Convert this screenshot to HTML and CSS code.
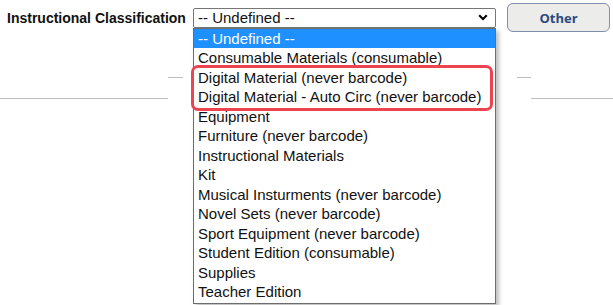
FILE: index.html
```html
<!DOCTYPE html>
<html lang="en">
<head>
    <meta charset="UTF-8">
    <title>Instructional Classification</title>
    <link rel="stylesheet" href="styles.css">
</head>
<body>
    <div class="form-row">
        <label class="field-label" for="classification">Instructional Classification</label>
        <div class="select-wrap">
            <div class="select-box" id="classification">
                <span>-- Undefined --</span>
                <svg class="chevron" width="10" height="7" viewBox="0 0 10 7">
                    <path d="M1.2 1.2 L5 5 L8.8 1.2" fill="none" stroke="#000" stroke-width="2"/>
                </svg>
            </div>
            <ul class="dropdown">
                <li class="selected">-- Undefined --</li>
                <li>Consumable Materials (consumable)</li>
                <li>Digital Material (never barcode)</li>
                <li>Digital Material - Auto Circ (never barcode)</li>
                <li>Equipment</li>
                <li>Furniture (never barcode)</li>
                <li>Instructional Materials</li>
                <li>Kit</li>
                <li>Musical Insturments (never barcode)</li>
                <li>Novel Sets (never barcode)</li>
                <li>Sport Equipment (never barcode)</li>
                <li>Student Edition (consumable)</li>
                <li>Supplies</li>
                <li>Teacher Edition</li>
            </ul>
            <div class="callout"></div>
        </div>
        <button class="btn-other">Other</button>
    </div>

    <div class="section-rule">
        <div class="rule-row">
            <span class="tick tick-left"></span>
            <span class="tick tick-right"></span>
        </div>
        <div class="rule-row rule-long">
            <span class="line line-left"></span>
            <span class="line line-right"></span>
        </div>
    </div>
</body>
</html>
```

FILE: styles.css
```css
html, body {
    height: 100%;
}
body {
    margin: 0;
    min-height: 305px;
    background-color: #fff;
    font-family: "Liberation Sans", Arial, sans-serif;
    color: #000;
}
.form-row {
    display: flex;
    align-items: center;
    height: 29px;
    padding: 3px 0 0 7px;
}
.field-label {
    font-weight: bold;
    font-size: 14px;
    width: 186px;
    color: #111;
}
.select-wrap {
    position: relative;
    z-index: 2;
    width: 303px;
}
.select-box {
    display: flex;
    align-items: center;
    justify-content: space-between;
    box-sizing: border-box;
    height: 20px;
    padding: 0 7px 0 4px;
    border: 1px solid #767676;
    border-radius: 2px;
    font-size: 15px;
    color: #111;
}
.chevron {
    display: block;
}
.dropdown {
    position: absolute;
    top: 20px;
    left: 0;
    box-sizing: border-box;
    width: 303px;
    margin: 0;
    padding: 0 0 1px;
    list-style: none;
    background-color: #fff;
    border: 1px solid #6d6d6d;
    box-shadow: 3px 3px 4px rgba(0, 0, 0, 0.25);
}
.dropdown li {
    height: 19.5px;
    line-height: 19.5px;
    padding-left: 4px;
    font-size: 15px;
    color: #111;
    white-space: nowrap;
}
.dropdown li.selected {
    background-color: #1e90ff;
    color: #fff;
}
.callout {
    position: absolute;
    top: 57px;
    left: -2px;
    box-sizing: border-box;
    width: 302px;
    height: 46px;
    border: 3px solid #ec4450;
    border-radius: 7px;
}
.btn-other {
    box-sizing: border-box;
    width: 103px;
    height: 29px;
    margin-left: 11px;
    background-color: #ececea;
    border: 1.5px solid #7f90aa;
    border-radius: 6px;
    font-family: "Open Sans", sans-serif;
    font-weight: bold;
    font-size: 13px;
    color: #2a4a80;
}
.section-rule {
    margin-top: 44px;
}
.rule-row {
    height: 20px;
    border-top: 1px solid transparent;
}
.rule-long {
    height: 1px;
}
.tick, .line {
    display: block;
    float: left;
    height: 1px;
    background-color: #bdbdbd;
}
.tick-left {
    width: 15px;
    margin-left: 168px;
}
.tick-right {
    width: 14px;
    margin-left: 334px;
}
.line-left {
    width: 168px;
}
.line-right {
    width: 82px;
    margin-left: 363px;
}
```
